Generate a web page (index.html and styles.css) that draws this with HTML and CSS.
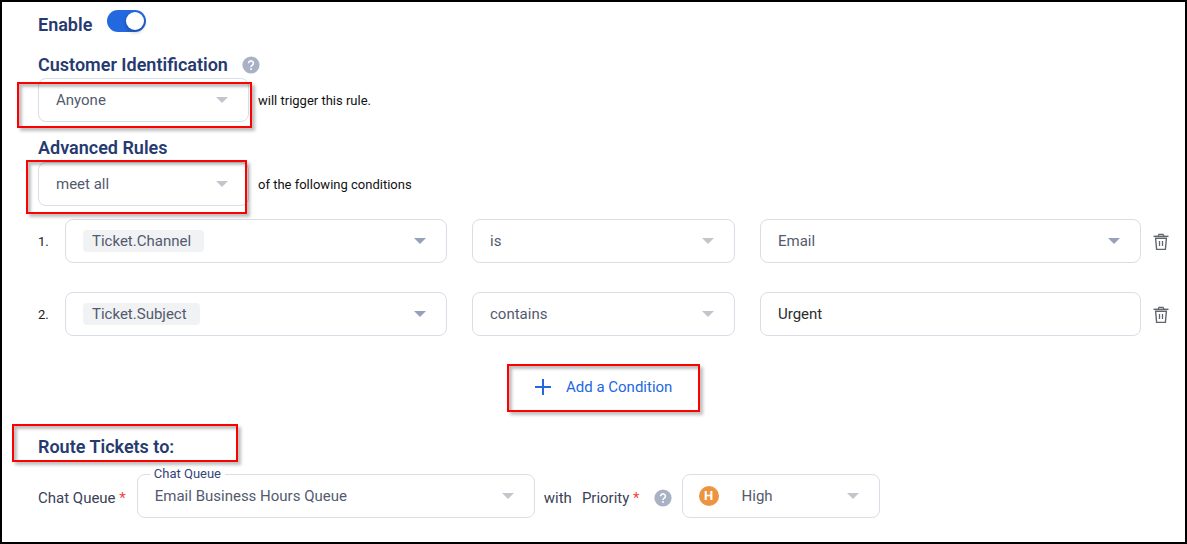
FILE: index.html
```
<!DOCTYPE html>
<html lang="en">
<head>
  <meta charset="UTF-8">
  <meta name="viewport" content="width=device-width, initial-scale=1.0">
  <title>Routing Rule</title>
  <link rel="stylesheet" href="styles.css">
</head>
<body>
  <form class="rule">
    <div class="enable">
      <label class="title" for="enable">Enable</label>
      <input id="enable" class="switch" type="checkbox" role="switch" checked>
    </div>

    <div class="heading first">
      <h3 class="title" id="who_title">Customer Identification</h3>
      <svg class="help" viewBox="0 0 18 18" role="img" aria-label="Help">
        <circle cx="9" cy="9" r="8.6" fill="#a9b1c4"/>
        <path d="M6.6 7.2a2.4 2.3 0 1 1 3.7 1.9c-.8.55-1.3.9-1.3 1.8" fill="none" stroke="#fff" stroke-width="1.6"/>
        <circle cx="9" cy="13.1" r="1" fill="#fff"/>
      </svg>
    </div>
    <div class="line">
      <div class="field short mark mark_who">
        <select id="who" aria-labelledby="who_title"><option>Anyone</option></select>
      </div>
      <label class="note" for="who">will trigger this rule.</label>
    </div>

    <div class="heading second">
      <h3 class="title" id="meet_title">Advanced Rules</h3>
    </div>
    <div class="line">
      <div class="field short mark mark_meet">
        <select id="meet" aria-labelledby="meet_title"><option>meet all</option></select>
      </div>
      <label class="note" for="meet">of the following conditions</label>
    </div>

    <div class="conditions">
      <div class="condition">
        <span class="num">1.</span>
        <div class="cells">
          <div class="field dark">
            <select class="chip" aria-label="Condition 1 field"><option>Ticket.Channel</option></select>
          </div>
          <div class="field">
            <select aria-label="Condition 1 operator"><option>is</option></select>
          </div>
          <div class="field dark">
            <select aria-label="Condition 1 value"><option>Email</option></select>
          </div>
        </div>
        <button type="button" class="trash" aria-label="Delete condition 1">
          <svg viewBox="0 0 16 18" fill="none" stroke="#62656d">
            <path d="M.5 3.3h15" stroke-width="1.4"/>
            <path d="M5.2 3l.7-1.6h4.2l.7 1.6" stroke-width="1.2"/>
            <path d="M2.6 5.2l1 11.2h8.8l1-11.2z" stroke-width="1.4"/>
            <path d="M6.5 8v5M9.5 8v5" stroke-width="1.3"/>
          </svg>
        </button>
      </div>

      <div class="condition">
        <span class="num">2.</span>
        <div class="cells">
          <div class="field dark">
            <select class="chip" aria-label="Condition 2 field"><option>Ticket.Subject</option></select>
          </div>
          <div class="field">
            <select aria-label="Condition 2 operator"><option>contains</option></select>
          </div>
          <div class="field plain">
            <input type="text" value="Urgent" aria-label="Condition 2 value">
          </div>
        </div>
        <button type="button" class="trash" aria-label="Delete condition 2">
          <svg viewBox="0 0 16 18" fill="none" stroke="#62656d">
            <path d="M.5 3.3h15" stroke-width="1.4"/>
            <path d="M5.2 3l.7-1.6h4.2l.7 1.6" stroke-width="1.2"/>
            <path d="M2.6 5.2l1 11.2h8.8l1-11.2z" stroke-width="1.4"/>
            <path d="M6.5 8v5M9.5 8v5" stroke-width="1.3"/>
          </svg>
        </button>
      </div>
    </div>

    <button type="button" class="add mark">
      <svg viewBox="0 0 16 16" stroke="#2468e0" stroke-width="2"><path d="M8 0v16M0 8h16"/></svg>
      Add a Condition
    </button>

    <div class="heading route mark mark_route">
      <h3 class="title">Route Tickets to:</h3>
    </div>
    <div class="line queue_line">
      <span class="text">Chat Queue <b class="req">*</b></span>
      <div class="field queue">
        <label class="float" for="queue">Chat Queue</label>
        <select id="queue"><option>Email Business Hours Queue</option></select>
      </div>
      <span class="text with">with</span>
      <label class="text" for="priority">Priority <b class="req">*</b></label>
      <svg class="help" viewBox="0 0 18 18" role="img" aria-label="Help">
        <circle cx="9" cy="9" r="8.6" fill="#a9b1c4"/>
        <path d="M6.6 7.2a2.4 2.3 0 1 1 3.7 1.9c-.8.55-1.3.9-1.3 1.8" fill="none" stroke="#fff" stroke-width="1.6"/>
        <circle cx="9" cy="13.1" r="1" fill="#fff"/>
      </svg>
      <div class="field priority">
        <span class="badge">H</span>
        <select id="priority"><option>High</option></select>
      </div>
    </div>
  </form>
</body>
</html>
```
FILE: styles.css
```
* {
  box-sizing: border-box;
}
body {
  margin: 0;
  font-family: Roboto, "Liberation Sans", sans-serif;
  font-size: 15px;
  color: #3a4257;
  background: #fff;
}
.rule {
  min-height: 100vh;
  padding: 8px 16px 24px 36px;
  border: 2px solid #000;
}
.title {
  margin: 0;
  font-size: 18px;
  font-weight: 600;
  line-height: 30px;
  color: #263a70;
}
.enable {
  display: flex;
  gap: 15px;
  margin-bottom: 10px;
}

/* toggle */
.switch {
  appearance: none;
  width: 39px;
  height: 22px;
  margin: 0;
  padding: 2px;
  border-radius: 11px;
  background: #2468e0;
}
.switch::before {
  content: "";
  display: block;
  width: 18px;
  height: 18px;
  border-radius: 50%;
  background: #fff;
  box-shadow: 0 2px 4px rgba(0, 0, 0, 0.3);
}
.switch:checked::before {
  margin-left: auto;
}

.heading {
  display: flex;
  align-items: center;
  gap: 14px;
  height: 28px;
}
.first {
  padding-top: 2px;
}
.second {
  margin-top: 12px;
}
.help {
  width: 18px;
  height: 18px;
  flex: none;
}
.line {
  display: flex;
  align-items: center;
}
.note {
  margin-left: 9px;
  font-size: 13px;
  color: #111;
}

/* fields */
.field {
  position: relative;
  display: flex;
  align-items: center;
  height: 44px;
  border: 1px solid #d9dde6;
  border-radius: 8px;
}
.field::after {
  content: "";
  position: absolute;
  right: 20px;
  border: 6px solid transparent;
  border-top-color: #c3c5cb;
  border-bottom: 0;
  pointer-events: none;
}
.dark::after {
  border-top-color: #98a1bb;
}
.plain::after {
  display: none;
}
select,
input[type="text"] {
  appearance: none;
  width: 100%;
  height: 100%;
  padding: 0 36px 0 17px;
  border: 0;
  border-radius: 8px;
  background: transparent;
  font: inherit;
  color: #535a6e;
}
input[type="text"] {
  padding-right: 16px;
  color: #2c2c2c;
}
.short {
  width: 211px;
}
.chip {
  field-sizing: content;
  width: auto;
  height: 22px;
  margin-left: 17px;
  padding: 0 13px 0 9px;
  border-radius: 4px;
  background: #f1f2f4;
}

.conditions {
  display: grid;
  gap: 29px;
  margin-top: 13px;
}
.condition {
  display: flex;
  align-items: center;
}
.num {
  width: 27px;
  font-size: 13px;
  color: #222;
}
.cells {
  flex: 1;
  display: grid;
  grid-template-columns: 382fr 263fr 381fr;
  gap: 25px;
}
.trash {
  width: 28px;
  padding: 2px 0 0 12px;
  border: 0;
  background: none;
}
.trash svg {
  display: block;
  width: 16px;
  height: 18px;
}
.add {
  display: flex;
  align-items: center;
  gap: 15px;
  height: 48px;
  margin: 28px auto 0;
  padding: 0 24px 2px 28px;
  min-width: 193px;
  border: 0;
  background: none;
  font: inherit;
  color: #2468e0;
}
.add svg {
  width: 16px;
  height: 16px;
}

.route {
  width: 200px;
  margin-top: 20px;
  padding-top: 2px;
}
.queue_line {
  margin-top: 14px;
}
.text {
  padding-top: 3px;
  white-space: nowrap;
}
.req {
  font-weight: 400;
  color: #f44336;
}
.queue {
  width: 398px;
  margin: 0 9px 0 11px;
}
.float {
  position: absolute;
  top: -9px;
  left: 12px;
  padding: 0 4px;
  font-size: 13px;
  line-height: 16px;
  color: #34447a;
  background: #fff;
}
.with {
  margin-right: 10px;
}
.queue_line .help {
  margin: 4px 10px 0 14px;
}
.priority {
  width: 198px;
  padding-left: 16px;
}
.priority select {
  padding-left: 23px;
}
.badge {
  flex: none;
  width: 20px;
  border-radius: 50%;
  background: #ec9440;
  color: #fff;
  font-size: 13px;
  font-weight: 700;
  line-height: 20px;
  text-align: center;
}

/* red callouts */
.mark {
  position: relative;
}
.mark::before {
  content: "";
  position: absolute;
  z-index: 1;
  inset: 0;
  border: 2px solid #f00;
  box-shadow: 3px 3px 3px rgba(0, 0, 0, 0.25), inset 3px 3px 3px rgba(0, 0, 0, 0.25);
  pointer-events: none;
}
.mark_who::before {
  inset: 3px -4px -7px -22px;
}
.mark_meet::before {
  inset: -3px 1px -9px -13px;
}
.mark_route::before {
  inset: -8px 0 -2px -26px;
}
```
